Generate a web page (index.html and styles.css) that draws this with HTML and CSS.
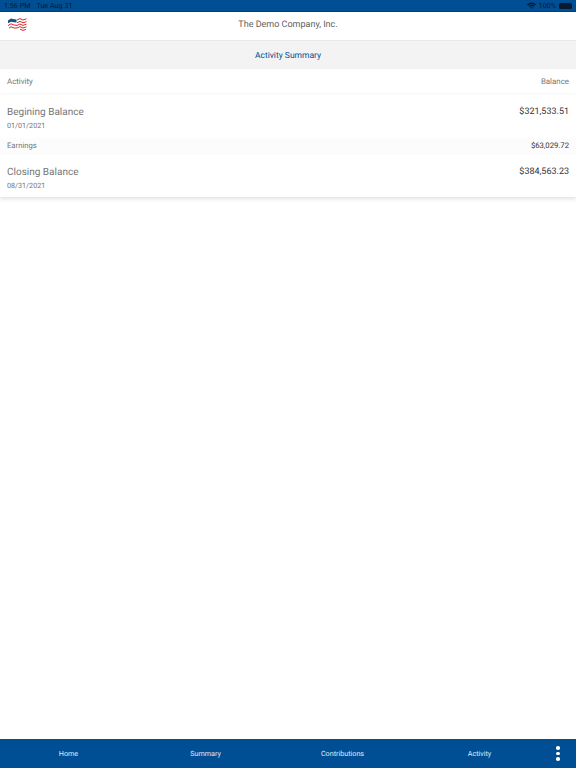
FILE: index.html
```html
<!DOCTYPE html>
<html lang="en">
<head>
  <meta charset="UTF-8">
  <title>Activity Summary</title>
  <link rel="stylesheet" href="styles.css">
</head>
<body>

<div class="status-bar">
  <div class="status-left"><span>1:56 PM</span><span>Tue Aug 31</span></div>
  <div class="status-right">
    <svg class="wifi" width="9" height="7" viewBox="0 0 11 8">
      <path d="M0 2.6 A8 8 0 0 1 11 2.6 L9.8 3.9 A6.2 6.2 0 0 0 1.2 3.9 Z" fill="#071a30"/>
      <path d="M2 4.6 A5 5 0 0 1 9 4.6 L7.9 5.8 A3.4 3.4 0 0 0 3.1 5.8 Z" fill="#071a30"/>
      <path d="M3.9 6.5 A2.3 2.3 0 0 1 7.1 6.5 L5.5 8 Z" fill="#071a30"/>
    </svg>
    <span>100%</span>
    <div class="battery"></div>
  </div>
</div>

<header class="top-bar">
  <svg class="logo" width="19" height="13" viewBox="0 0 19 13">
    <path d="M0 2.6 L3 0.4 L6 1.2 L8.5 1.4 L8.5 4.4 L6 4.2 L3 3.8 L0 5.2 Z" fill="#1f4a86"/>
    <g fill="none" stroke="#d9262c" stroke-width="1">
      <path d="M9 2 L12 0.6 L15 2 L18.5 0.8"/>
      <path d="M9 4.8 L12 3.4 L15 4.8 L18.5 3.6"/>
      <path d="M0 7.6 L3 5.8 L6 7 L9 7.4 L12 6 L15 7.4 L18.5 6.2"/>
      <path d="M1 10.2 L3 8.8 L6 10 L9 10 L12 8.6 L15 10 L18.5 8.8"/>
      <path d="M12 11.2 L15 12.4 L18 11.4"/>
    </g>
  </svg>
  <div class="company">The Demo Company, Inc.</div>
</header>

<div class="page-title">Activity Summary</div>

<main class="card">
  <div class="row head-row">
    <span>Activity</span>
    <span>Balance</span>
  </div>
  <div class="row big-row first">
    <div>
      <div class="big-label">Begining Balance</div>
      <div class="date">01/01/2021</div>
    </div>
    <div class="big-amount">$321,533.51</div>
  </div>
  <div class="row small-row">
    <span>Earnings</span>
    <span class="small-amount">$63,029.72</span>
  </div>
  <div class="row big-row last">
    <div>
      <div class="big-label">Closing Balance</div>
      <div class="date">08/31/2021</div>
    </div>
    <div class="big-amount">$384,563.23</div>
  </div>
</main>

<nav class="tabs">
  <a>Home</a>
  <a>Summary</a>
  <a>Contributions</a>
  <a>Activity</a>
  <div class="more"><i></i><i></i><i></i></div>
</nav>

</body>
</html>
```

FILE: styles.css
```css
html, body { height: 100%; }
body { margin: 0; height: 768px; overflow: hidden; display: flex; flex-direction: column; font-family: Roboto, "Liberation Sans", sans-serif; background: #fff; color: #757575; text-rendering: geometricPrecision; }

.status-bar { height: 11px; background: #004f95; color: #071a30; font-size: 7.2px; line-height: 11px; padding: 0 4px; display: flex; justify-content: space-between; border-bottom: 1px solid #003f78; }
.status-left { display: flex; gap: 6px; }
.status-right { display: flex; align-items: center; gap: 3px; }
.battery { width: 13px; height: 6px; background: #071a30; border-radius: 1.5px; }

.top-bar { height: 28px; display: flex; align-items: center; justify-content: center; position: relative; background: #fff; }
.logo { position: absolute; left: 8px; top: 6px; }
.company { font-size: 9px; line-height: 24px; margin-bottom: 3px; color: #616161; }

.page-title { height: 28px; background: #f3f3f3; border-top: 1px solid #e8e8e8; color: #004f95; font-size: 8.5px; line-height: 30px; text-align: center; }

.card { background: #fff; box-shadow: 0 2px 4px rgba(0,0,0,0.12); }
.row { display: flex; justify-content: space-between; padding: 0 7px; }
.head-row { height: 24px; align-items: center; font-size: 7.9px; padding-top: 1px; box-sizing: border-box; box-shadow: 0 1px 2px rgba(0,0,0,0.04); }
.big-row { height: 44px; }
.big-row.first { height: 45px; }
.big-label { font-size: 10px; line-height: 14px; margin-top: 12.5px; }
.date { font-size: 7.2px; line-height: 12px; margin-top: 0.5px; }
.big-amount { font-size: 9px; line-height: 14px; margin-top: 12px; color: #333; }
.small-row { height: 15px; align-items: center; font-size: 7.7px; background: #fcfcfc; box-shadow: 0 1px 2px rgba(0,0,0,0.03); }
.small-amount { color: #333; }

.tabs { margin-top: auto; height: 29px; background: #004f95; display: flex; align-items: center; color: #e3ebf4; font-size: 7.2px; }
.tabs a { width: 137px; text-align: center; }
.more { flex: 1; display: flex; flex-direction: column; align-items: flex-start; padding-left: 8px; gap: 2px; }
.more i { width: 3.5px; height: 3.5px; border-radius: 50%; background: #fff; }
```
